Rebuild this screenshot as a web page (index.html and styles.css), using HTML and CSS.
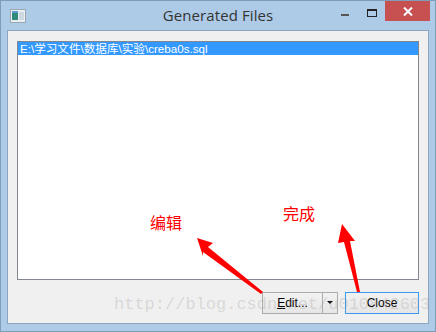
FILE: index.html
```
<!doctype html>
<html>
<head>
  <title>Generated Files</title>
  <meta charset="utf-8"/>
  <link rel="stylesheet" href="styles.css">
</head>
<body>
  <div class="Window">
    <div class="Window__Titlebar">
      <div class="Window__Left">
        <svg class="Window__Icon" width="16" height="14" viewBox="0 0 16 14">
          <rect x="0.5" y="0.5" width="15" height="13" fill="#e8eef2" stroke="#9aa6b0"/>
          <rect x="2" y="3" width="6" height="8" fill="#2f8a7a"/>
          <rect x="2" y="2" width="6" height="2" fill="#5a9bd0"/>
          <rect x="9" y="3" width="5" height="8" fill="#cfd8de"/>
        </svg>
      </div>
      <div class="Window__Title">Generated Files</div>
      <div class="Window__Controls">
        <span class="Window__Min"></span>
        <span class="Window__Max"></span>
        <span class="Window__Close">
          <svg width="10" height="9" viewBox="0 0 10 9"><path d="M1 0.5 L9 8.5 M9 0.5 L1 8.5" stroke="#fff" stroke-width="2"/></svg>
        </span>
      </div>
    </div>
    <div class="Window__Client">
      <div class="List">
        <div class="List__Item List__Item--selected">E:\学习文件\数据库\实验\creba0s.sql</div>
      </div>
      <div class="Buttons">
        <button class="Button Button--split"><span class="Button__Label"><u>E</u>dit...</span><span class="Button__Arrow"></span></button>
        <button class="Button Button--default">Close</button>
      </div>
      <div class="Watermark">http://blog.csdn.net/u010842603</div>
    </div>
    <div class="Note Note--edit">编辑</div>
    <div class="Note Note--done">完成</div>
    <svg class="Arrows" width="436" height="332" viewBox="0 0 436 332">
      <polygon points="197,238 213,243 208,247 263,292 261,294 203,252 203,256" fill="#ff0000"/>
      <polygon points="342,224 355,241 350,241 360,292 357,292 344,242 338,243" fill="#ff0000"/>
    </svg>
  </div>
</body>
</html>
```

FILE: styles.css
```
body {
  margin: 0;
  font-family: "Liberation Sans", "Noto Sans CJK SC", sans-serif;
}

.Window {
  position: relative;
  width: 436px;
  height: 332px;
  box-sizing: border-box;
  background-color: #adcbe7;
  border: 1px solid #7f9db9;
  display: flex;
  flex-direction: column;
  padding: 0 6px 7px;
}

.Window__Titlebar {
  height: 29px;
  display: grid;
  grid-template-columns: 1fr auto 1fr;
  align-items: start;
}
.Window__Left {
  padding: 8px 0 0 3px;
}
.Window__Icon {
  display: block;
}
.Window__Title {
  font-family: "Open Sans", sans-serif;
  font-size: 15px;
  color: #333;
  padding-top: 4px;
  letter-spacing: 0.1px;
}
.Window__Controls {
  display: flex;
  justify-content: flex-end;
  align-items: flex-start;
  margin-right: -1px;
}
.Window__Min {
  width: 8px;
  height: 2px;
  background-color: #555;
  margin: 13px 18px 0 0;
}
.Window__Max {
  width: 8px;
  height: 5px;
  border: 1px solid #222;
  border-top-width: 2px;
  margin: 8px 8px 0 0;
}
.Window__Close {
  width: 45px;
  height: 20px;
  background-color: #c75050;
  display: flex;
  align-items: center;
  justify-content: center;
}

.Window__Client {
  flex: 1;
  position: relative;
  background-color: #f0f0f0;
  border: 1px solid #8fa5bd;
  display: flex;
  flex-direction: column;
  padding: 10px 9px 8px;
}

.List {
  height: 239px;
  box-sizing: border-box;
  background-color: #fff;
  border: 1px solid #828790;
}
.List__Item {
  font-size: 11.6px;
  line-height: 13px;
  padding: 0 2px;
  white-space: nowrap;
}
.List__Item--selected {
  background-color: #3399ff;
  color: #fff;
}

.Buttons {
  display: flex;
  justify-content: flex-end;
  gap: 7px;
  margin-top: 12px;
  position: relative;
  z-index: 1;
}
.Button {
  height: 22px;
  box-sizing: border-box;
  font-family: "Liberation Sans", sans-serif;
  font-size: 12px;
  color: #000;
  background: linear-gradient(#f2f2f2, #e6e6e6);
  border: 1px solid #acacac;
  padding: 0;
  display: flex;
  align-items: center;
}
.Button--split {
  width: 76px;
}
.Button__Label {
  flex: 1;
  text-align: center;
}
.Button__Arrow {
  width: 14px;
  height: 20px;
  border-left: 1px solid #acacac;
  position: relative;
}
.Button__Arrow::after {
  content: "";
  position: absolute;
  left: 4px;
  top: 8px;
  border-left: 3px solid transparent;
  border-right: 3px solid transparent;
  border-top: 3px solid #000;
}
.Button--default {
  width: 74px;
  justify-content: center;
  border-color: #3c99f0;
}

.Watermark {
  position: absolute;
  left: 106px;
  top: 264px;
  font-family: "Liberation Mono", monospace;
  font-size: 17px;
  color: rgba(150, 150, 150, 0.28);
  white-space: nowrap;
  z-index: 2;
}

.Note {
  position: absolute;
  font-size: 16px;
  color: #ff0000;
}
.Note--edit {
  left: 149px;
  top: 209px;
}
.Note--done {
  left: 282px;
  top: 200px;
}
.Arrows {
  position: absolute;
  left: -1px;
  top: -1px;
  z-index: 3;
}
```
